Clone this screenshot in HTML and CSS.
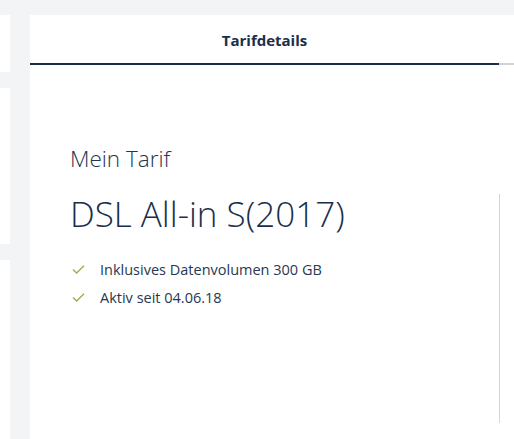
FILE: index.html
```html
<!DOCTYPE html>
<html lang="de">
<head>
    <meta charset="UTF-8">
    <meta name="viewport" content="width=device-width, initial-scale=1.0">
    <title>Tarifdetails</title>
    <link rel="stylesheet" href="styles.css">
</head>
<body>
    <div class="page">
        <!-- Left sidebar (mostly cut off) -->
        <div class="sidebar">
            <div class="side-card side-card-top"></div>
            <div class="side-card side-card-mid"></div>
            <div class="side-card side-card-bottom"></div>
        </div>

        <!-- Main card -->
        <div class="card">
            <div class="tabs">
                <div class="tab active">Tarifdetails</div>
                <div class="tab"></div>
            </div>

            <div class="tariff">
                <div class="tariff-info">
                    <h2 class="tariff-label">Mein Tarif</h2>
                    <h1 class="tariff-name">DSL All-in S(2017)</h1>
                    <ul class="features">
                        <li>
                            <svg class="check" viewBox="0 0 13 9" width="13" height="9">
                                <path d="M1 4.6 L4.6 8 L12 0.8" fill="none" stroke="#94b34a" stroke-width="1.4"/>
                            </svg>
                            Inklusives Datenvolumen 300 GB
                        </li>
                        <li>
                            <svg class="check" viewBox="0 0 13 9" width="13" height="9">
                                <path d="M1 4.6 L4.6 8 L12 0.8" fill="none" stroke="#94b34a" stroke-width="1.4"/>
                            </svg>
                            Aktiv seit 04.06.18
                        </li>
                    </ul>
                </div>
                <div class="tariff-side"></div>
            </div>
        </div>
    </div>
</body>
</html>
```

FILE: styles.css
```css
html, body {
    height: 100%;
}
body {
    margin: 0;
    background-color: #f3f4f6;
    font-family: "Open Sans", "Noto Sans", Arial, sans-serif;
    color: #1a2e4b;
    overflow: hidden;
}
.page {
    display: flex;
    gap: 20px;
    padding-top: 15px;
    height: 100%;
    box-sizing: border-box;
}
.sidebar {
    width: 10px;
    display: flex;
    flex-direction: column;
    gap: 16px;
}
.side-card {
    background: white;
}
.side-card-top {
    height: 57px;
}
.side-card-mid {
    height: 156px;
}
.side-card-bottom {
    flex: 1;
}
.card {
    flex: 1;
    background: white;
    display: flex;
    flex-direction: column;
}
.tabs {
    display: flex;
}
.tab {
    flex: 1;
    padding: 15px 0 13px;
    line-height: 20px;
    height: 20px;
    border-bottom: 2px solid #d3d3d3;
    text-align: center;
    font-size: 15px;
    font-weight: 700;
}
.tab.active {
    flex: 0 0 469px;
    border-bottom-color: #1a2e4b;
}
.tariff {
    display: flex;
    flex: 1;
    padding: 0 0 16px 40px;
}
.tariff-info {
    flex: 1;
    padding-top: 79px;
}
.tariff-label {
    margin: 0;
    font-size: 22.5px;
    font-weight: 300;
    line-height: 30px;
    color: #233650;
}
.tariff-name {
    margin: 20px 0 0;
    font-size: 35px;
    font-weight: 300;
    line-height: 40px;
}
.features {
    list-style: none;
    margin: 21px 0 0;
    padding: 0;
}
.features li {
    display: flex;
    align-items: center;
    height: 28px;
    font-size: 14.5px;
    color: #263952;
}
.check {
    margin: 0 15px 0 2px;
}
.tariff-side {
    width: 14px;
    margin-top: 129px;
    border-left: 1px solid #d6d6d6;
}
```
